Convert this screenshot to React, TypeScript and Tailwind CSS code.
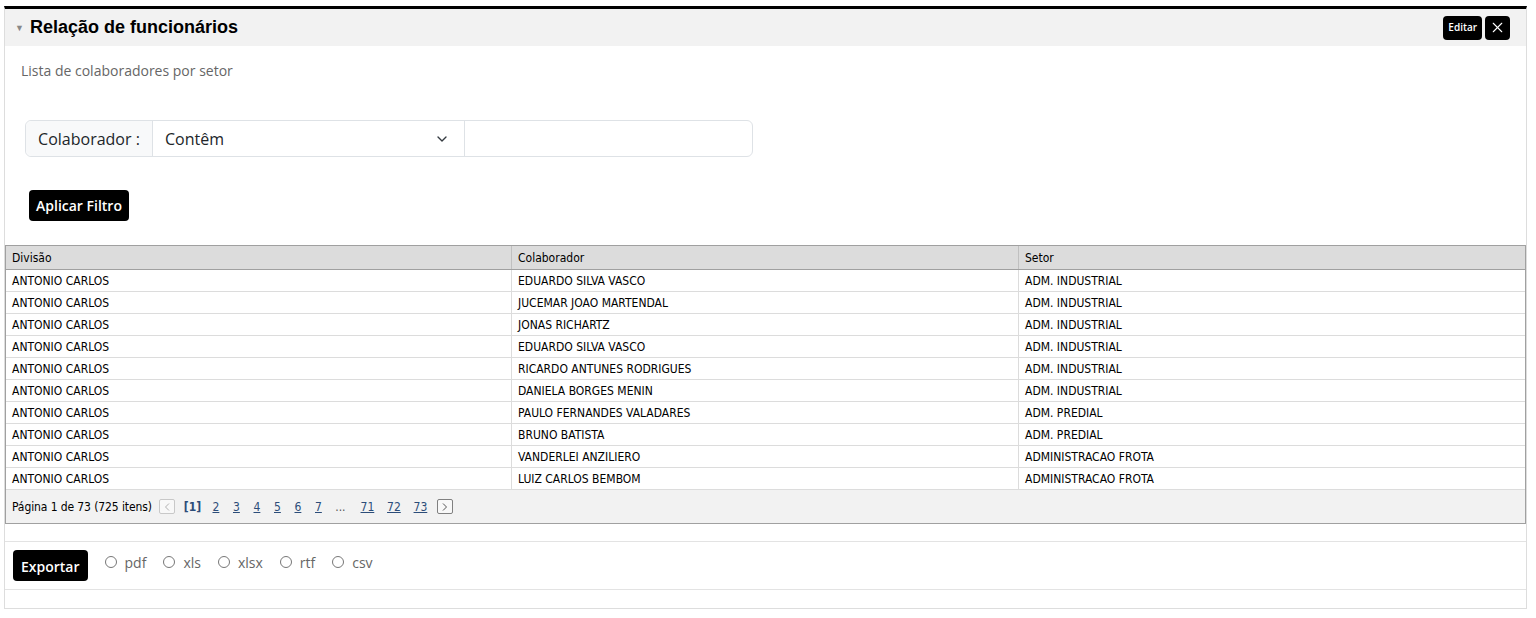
import { ChevronDown, X } from "lucide-react";

const ROWS: [string, string, string][] = [
  ["ANTONIO CARLOS", "EDUARDO SILVA VASCO", "ADM. INDUSTRIAL"],
  ["ANTONIO CARLOS", "JUCEMAR JOAO MARTENDAL", "ADM. INDUSTRIAL"],
  ["ANTONIO CARLOS", "JONAS RICHARTZ", "ADM. INDUSTRIAL"],
  ["ANTONIO CARLOS", "EDUARDO SILVA VASCO", "ADM. INDUSTRIAL"],
  ["ANTONIO CARLOS", "RICARDO ANTUNES RODRIGUES", "ADM. INDUSTRIAL"],
  ["ANTONIO CARLOS", "DANIELA BORGES MENIN", "ADM. INDUSTRIAL"],
  ["ANTONIO CARLOS", "PAULO FERNANDES VALADARES", "ADM. PREDIAL"],
  ["ANTONIO CARLOS", "BRUNO BATISTA", "ADM. PREDIAL"],
  ["ANTONIO CARLOS", "VANDERLEI ANZILIERO", "ADMINISTRACAO FROTA"],
  ["ANTONIO CARLOS", "LUIZ CARLOS BEMBOM", "ADMINISTRACAO FROTA"],
];

const PAGES = ["2", "3", "4", "5", "6", "7"];
const LAST_PAGES = ["71", "72", "73"];
const FORMATS = ["pdf", "xls", "xlsx", "rtf", "csv"];

const gridFont = { fontFamily: "'DejaVu Sans Condensed', 'DejaVu Sans', sans-serif" };

export default function App() {
  return (
    <div className="min-h-screen bg-white pt-[6px] pl-[4px]" style={{ fontFamily: "'Open Sans', sans-serif" }}>
      <div className="w-[1523px] border-t-[3px] border-t-black border-x border-b border-[#dddddd] pb-[18px]">
        {/* Header */}
        <div className="flex h-[37px] items-center justify-between bg-[#f2f2f2] pl-[10px] pr-[16px]">
          <div className="flex items-center gap-[6px]">
            <span className="text-[9px] leading-none text-[#888]">▼</span>
            <h2
              className="text-[18px] font-bold text-black"
              style={{ fontFamily: "'Liberation Sans', Arial, sans-serif" }}
            >
              Relação de funcionários
            </h2>
          </div>
          <div className="flex items-center gap-[3px]">
            <button className="flex h-[24px] items-center rounded-[4px] bg-black px-[5px] text-[10px] font-semibold text-white">
              Editar
            </button>
            <button className="flex h-[24px] w-[25px] items-center justify-center rounded-[4px] bg-black text-white">
              <X size={17} strokeWidth={1.5} />
            </button>
          </div>
        </div>

        {/* Body */}
        <div className="px-[16px] pt-[14px] text-[14px] text-[#666]">Lista de colaboradores por setor</div>

        <div className="mt-[39px] pl-[20px]">
          <div className="flex h-[37px] w-[728px] rounded-[6px] border border-[#dee2e6] text-[16px] text-[#212529]">
            <div className="flex w-[127px] items-center justify-center rounded-l-[6px] border-r border-[#dee2e6] bg-[#f8f9fa]">
              Colaborador :
            </div>
            <div className="flex w-[312px] items-center justify-between border-r border-[#dee2e6] pl-[12px] pr-[14px]">
              <span>Contêm</span>
              <ChevronDown size={16} strokeWidth={2} className="text-[#343a40]" />
            </div>
            <div className="flex-1" />
          </div>
        </div>

        <div className="mt-[33px] pl-[24px]">
          <button className="h-[31px] rounded-[4px] bg-black px-[7px] text-[14px] font-semibold text-white">
            Aplicar Filtro
          </button>
        </div>

        {/* Grid */}
        <div className="mt-[24px] border border-[#a0a0a0] text-[12px] text-black" style={gridFont}>
          <div className="grid h-[24px] grid-cols-[505px_507px_1fr] border-b border-[#a0a0a0] bg-[#dcdcdc]">
            <div className="flex items-center pl-[6px]">Divisão</div>
            <div className="flex items-center border-l border-[#c0c0c0] pl-[6px]">Colaborador</div>
            <div className="flex items-center border-l border-[#c0c0c0] pl-[6px]">Setor</div>
          </div>
          {ROWS.map((r, i) => (
            <div key={i} className="grid h-[22px] grid-cols-[505px_507px_1fr] border-b border-[#dcdcdc]">
              <div className="flex items-center pl-[6px]">{r[0]}</div>
              <div className="flex items-center border-l border-[#dcdcdc] pl-[6px]">{r[1]}</div>
              <div className="flex items-center border-l border-[#dcdcdc] pl-[6px]">{r[2]}</div>
            </div>
          ))}
          <div className="flex h-[33px] items-center gap-[7.5px] bg-[#f2f2f2] pl-[6px]">
            <span className="tracking-[-0.1px]">Página 1 de 73 (725 itens)</span>
            <span className="flex h-[15px] w-[16px] items-center justify-center rounded-[2px] border border-[#c8c8c8] bg-[#f8f8f8] text-[#b0b0b0]">
              <svg width="6" height="8" viewBox="0 0 6 8"><path d="M5 0.5 L1.5 4 L5 7.5" fill="none" stroke="currentColor" strokeWidth="1" /></svg>
            </span>
            <span className="w-[19px] text-center font-bold text-[#2c4d79]">[1]</span>
            {PAGES.map((p) => (
              <span key={p} className="w-[13px] text-center text-[#2c4d79] underline">{p}</span>
            ))}
            <span className="w-[16px] text-center text-[#555]">...</span>
            {LAST_PAGES.map((p, i) => (
              <span key={p} className={`w-[19px] text-center text-[#2c4d79] underline ${i === 0 ? "ml-[2px]" : ""}`}>{p}</span>
            ))}
            <span className="flex h-[15px] w-[16px] items-center justify-center rounded-[2px] border border-[#808080] bg-[#f8f8f8] text-[#555]">
              <svg width="6" height="8" viewBox="0 0 6 8"><path d="M1 0.5 L4.5 4 L1 7.5" fill="none" stroke="currentColor" strokeWidth="1" /></svg>
            </span>
          </div>
        </div>

        {/* Export */}
        <div className="mt-[17px] border-y border-[#e3e3e3] py-[8px] pl-[8px]">
          <div className="flex items-center">
            <button className="h-[31px] rounded-[4px] bg-black px-[8px] text-[14px] font-semibold text-white">
              <span className="relative top-[1px]">Exportar</span>
            </button>
            <div className="ml-[17px] flex items-center gap-[17px] pb-[7px] text-[14px] text-[#666]">
              {FORMATS.map((f) => (
                <label key={f} className="flex items-center gap-[8px]">
                  <span className="h-[12px] w-[12px] rounded-full border border-[#777] bg-white" />
                  {f}
                </label>
              ))}
            </div>
          </div>
        </div>
      </div>
    </div>
  );
}
